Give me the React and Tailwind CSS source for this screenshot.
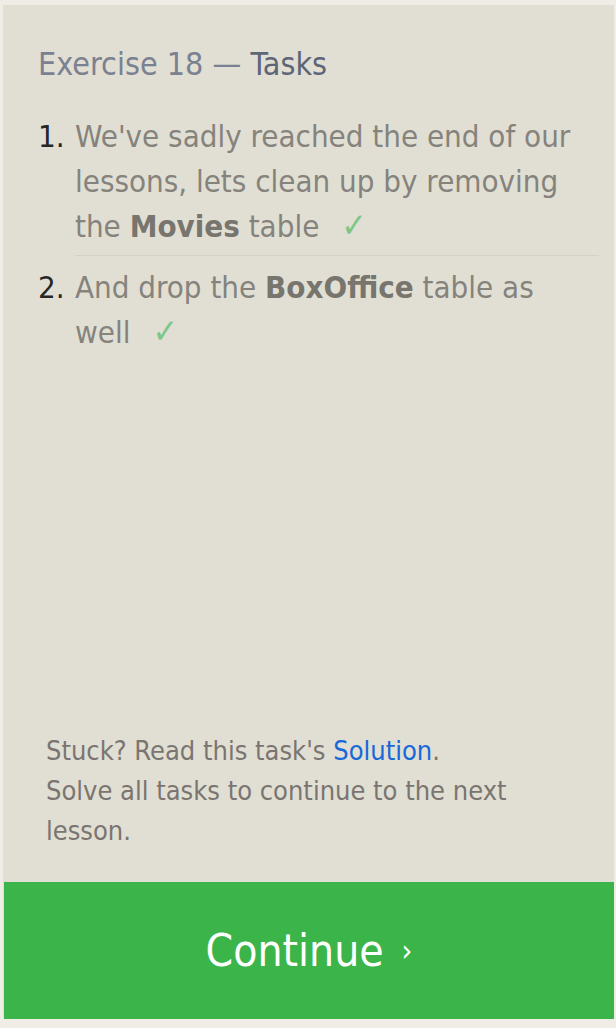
const font = { fontFamily: '"DejaVu Sans Condensed", "DejaVu Sans", sans-serif' };

function Check() {
  return <span className="ml-[22px] text-[34px] leading-[0] text-[#7cc787]">✓</span>;
}

export default function App() {
  return (
    <div className="h-[1028px] w-[616px] bg-[#efede6] pt-[5px]" style={font}>
      <div className="ml-[3px] flex h-[1014px] w-[611px] flex-col bg-[#e1dfd4]">
        <div className="pl-[35px] pr-[15px] pt-[38px]">
          <h1 className="text-[32px] leading-[42px] text-[#7b8190]">
            Exercise 18 — <span className="text-[#5d6577]">Tasks</span>
          </h1>
          <ol className="mt-[29px] text-[31px] leading-[45px] text-[#85837c]">
            <li className="flex">
              <span className="w-[37px] shrink-0 text-[#262626]">1.</span>
              <div className="flex-1 border-b border-[#d4d2c8] pb-[6px]">
                We've sadly reached the end of our lessons, lets clean up by removing the{' '}
                <b className="text-[#77756e]">Movies</b> table
                <Check />
              </div>
            </li>
            <li className="mt-[9px] flex">
              <span className="w-[37px] shrink-0 text-[#262626]">2.</span>
              <div className="flex-1">
                And drop the <b className="text-[#77756e]">BoxOffice</b> table as well
                <Check />
              </div>
            </li>
          </ol>
        </div>
        <div className="mt-auto px-[43px] pb-[31px] text-[27px] leading-[40px] text-[#7a7570]">
          <p>
            Stuck? Read this task's <a className="text-[#1868d9]">Solution</a>.
          </p>
          <p>Solve all tasks to continue to the next lesson.</p>
        </div>
        <button className="ml-px flex h-[137px] w-[610px] shrink-0 items-center justify-center bg-[#3bb54a] text-[44px] text-white">
          Continue <span className="ml-[18px] text-[30px]">›</span>
        </button>
      </div>
    </div>
  );
}
